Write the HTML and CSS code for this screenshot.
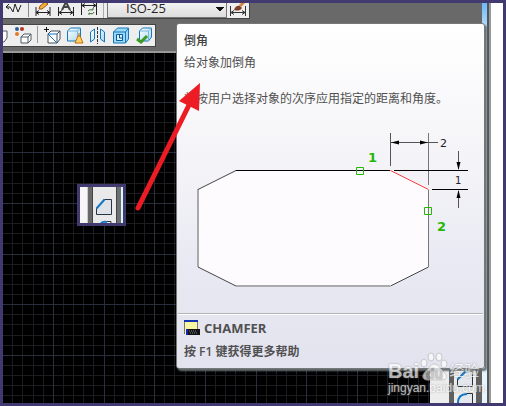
FILE: index.html
```
<!DOCTYPE html>
<html lang="zh-CN">
<head>
<meta charset="utf-8">
<title>CHAMFER</title>
<link rel="stylesheet" href="styles.css">
</head>
<body>
<div class="frame">
  <main class="app">
    <header class="toolbars">
      <div class="toolbar toolbar-dim">
        <svg width="104" height="15" viewBox="3 3 104 15" fill="none" stroke="#222" aria-hidden="true">
          <path d="M6 7l3-3M6 7l3 2M6 7h4l3 5 2-8 3 8 3-7"/>
          <path d="M28.500 3v14" stroke="#888"/>
          <path d="M36 7v9M50 7v9M36 12.500h14M39 10.500l-3 2 3 2M47 10.500l3 2-3 2"/>
          <path d="M39 9l1-3 5-4 3 2-6 5z" fill="#f5b335" stroke="#a8530c"/>
          <path d="M58.500 7v9M73.500 7v9M59 12.500h14M62 10.500l-3 2 3 2M70 10.500l3 2-3 2"/>
          <path d="M62 10l4-8 4 8M63 7h6" stroke="#444" stroke-width="2"/>
          <path d="M81.500 3v12M96.500 3v12M82 5.500h14M85 3.500l-3 2 3 2M93 3.500l3 2-3 2"/>
          <path d="M88 11q1-2 5-1v-2M94 12q-1 3-5 1v2" stroke="#35702b"/>
          <path d="M103.500 3v15" stroke="#aaa"/>
        </svg>
        <select class="style-select" aria-label="ISO-25"><option>ISO-25</option></select>
        <svg width="22" height="15" viewBox="227 3 22 15" fill="none" stroke="#333" aria-hidden="true">
          <path d="M230.500 6v10M245.500 6v10M231 12.500h14M234 10.500l-3 2 3 2M242 10.500l3 2-3 2"/>
          <path d="M234 10c1-4 4-5 6-4l2 2c-2 3-5 3-8 2z" fill="#7d4026" stroke="none"/>
          <path d="M240 6l4-4" stroke="#d88743" stroke-width="3"/>
        </svg>
      </div>
      <div class="toolbar">
        <svg width="152" height="21" viewBox="3 24 152 21" fill="none" aria-hidden="true">
          <defs>
            <linearGradient id="ice" x1="0" y1="0" x2="1" y2="1"><stop offset="0" stop-color="#fff"/><stop offset="1" stop-color="#a9d8f2"/></linearGradient>
          </defs>
          <path d="M3 30h4v7l-3 4H3" fill="#fff" stroke="#4c5863"/>
          <circle cx="17" cy="28" r="2" fill="#285f9b"/><circle cx="22" cy="28" r="2" fill="#b93228"/><circle cx="17" cy="33" r="2" fill="#e37921"/>
          <path d="M21 36l3-3h7v6l-3 3h-7zM21 36h7v6M28 36l3-3" fill="#fff" stroke="#4c5863"/>
          <path d="M37.500 25v17" stroke="#999"/>
          <path d="M44 28.500h5M46.500 26v5" stroke="#111"/>
          <path d="M48 33l3-3h9v8l-3 4h-9zM57 33v9M57 33l3-3" fill="#fff" stroke="#46515d"/>
          <path d="M48 33h9M48 33l9 9" stroke="#1773bd"/>
          <path d="M67.500 30l3-3h10v10l-3 3h-10z" fill="url(#ice)" stroke="#1678bb"/>
          <path d="M67.500 30h10v10M77.500 30l3-3" stroke="#74b9df"/>
          <path d="M79 32v3M78 35l-3 7h8l-3-7z" fill="#ffd36a" stroke="#c46d00"/>
          <path d="M90.500 31l4-3v10l-4 3zM100.500 28l4 3v10l-4-3z" fill="url(#ice)" stroke="#1678bb"/>
          <path d="M97.500 26v17" stroke="#333" stroke-dasharray="3 1"/>
          <path d="M113.500 31l4-4h11v11l-3 4h-12z" fill="#9bd8f7" stroke="#1678bb"/>
          <path d="M113.500 31h12v11M125.500 31l3-4" stroke="#1678bb"/>
          <path d="M116.500 33.500h6v6h-6z" fill="#d8f1ff" stroke="#075b98"/><path d="M119.500 34v3h3" stroke="#075b98"/>
          <path d="M139.500 30l3-3h9v9l-3 4h-9z" fill="url(#ice)" stroke="#1678bb"/>
          <path d="M139.500 30h9v10M148.500 30l3-3" stroke="#74b9df"/>
          <path d="M137 38l4 3 6-6" stroke="#3c9b25" stroke-width="3"/>
        </svg>
      </div>
    </header>
    <section class="canvas">
      <svg class="grid" width="100%" height="100%" aria-hidden="true">
        <defs>
          <pattern id="grid" width="152" height="152" patternUnits="userSpaceOnUse" patternTransform="translate(50 -2)">
            <path d="M10.500 0v152M20.500 0v152M30.500 0v152M40.500 0v152M61.500 0v152M71.500 0v152M81.500 0v152M91.500 0v152M111.500 0v152M121.500 0v152M132.500 0v152M142.500 0v152M0 10.500h152M0 20.500h152M0 30.500h152M0 40.500h152M0 61.500h152M0 71.500h152M0 81.500h152M0 91.500h152M0 111.500h152M0 121.500h152M0 132.500h152M0 142.500h152" stroke="#1b1b20"/>
            <path d="M.5 0v152M51.500 0v152M101.500 0v152M0 .5h152M0 51.500h152M0 101.500h152" stroke="#2b2e3d"/>
          </pattern>
        </defs>
        <rect width="100%" height="100%" fill="url(#grid)"/>
      </svg>
      <aside class="dock">
        <div class="dock-scroll"></div>
        <div class="dock-tools">
          <svg width="22" height="40" viewBox="454 363 22 40" fill="none" aria-hidden="true">
            <path d="M457.500 379v7.500h15v-15h-7z" fill="#e4e7eb" stroke="#26313d"/><path d="M457.500 379.500l8-8" stroke="#1175c4" stroke-width="2"/>
            <path d="M458 403q0-9 9-9h5v9" fill="#e4e7eb"/><path d="M458 403q0-9 9-9" stroke="#1175c4" stroke-width="2"/><path d="M467 393.500h5.500v9.500" stroke="#26313d"/>
          </svg>
        </div>
      </aside>
    </section>
  </main>
  <div class="edge"></div>
  <div class="margin"></div>

  <article class="tooltip">
    <div class="tip-body">
      <h1>倒角</h1>
      <p class="summary">给对象加倒角</p>
      <p class="detail">将按用户选择对象的次序应用指定的距离和角度。</p>
      <svg class="diagram" viewBox="184 127 290 166" fill="none">
        <path d="M198 189.500L236 170.500H390.500L428.500 189.500V267L390.500 286H236L198 267z" fill="#fefbff"/>
        <path d="M198 189v78M236 286h154" stroke="#aaa" stroke-width="2"/>
        <path d="M198 189.500l38-19M198 267l38 19M390.500 286l38-19" stroke="#444"/>
        <path d="M428.500 133v52M428.500 190v77" stroke="#777"/>
        <path d="M236 170.500h154M394 170.500h74M432 189.500h36" stroke="#000"/>
        <path d="M390.500 170.500l38 19" stroke="#ff3b3b"/>
        <path d="M390.500 133v33M391 142.500h47M458.500 151v18M458.500 191v17" stroke="#555"/>
        <path d="M391 142.500l8-2v4zM428 142.500l-8-2v4zM458.500 170l-2-8h4zM458.500 190l-2 8h4z" fill="#000"/>
        <path d="M356.500 167.500h7v7h-7zM424.500 207.500h7v7h-7z" stroke="#24b800"/>
        <text class="pick" x="368" y="162">1</text><text class="pick" x="437" y="231">2</text>
        <text class="measure" x="440" y="147">2</text><text class="measure small" x="455" y="184">1</text>
      </svg>
    </div>
    <footer class="tip-footer">
      <div class="command">
        <svg width="16" height="16" viewBox="0 0 16 16" aria-hidden="true">
          <path d="M0 0h14v14H0z" fill="#f8f6a2"/><path d="M0 0h14v2H0z" fill="#1231ad"/><path d="M.5 2v12M13.500 2v7" stroke="#777"/><path d="M2 9h14v6H2z" fill="#111"/><path d="M2 9h2v6H2z" fill="#1426b5"/><path d="M5 11h7M6 13h8" stroke="#888" stroke-dasharray="1 1"/>
        </svg>
        <strong>CHAMFER</strong>
      </div>
      <p>按 F1 键获得更多帮助</p>
    </footer>
  </article>

  <div class="inset">
    <svg width="43" height="36" viewBox="80 187 43 36" fill="none" aria-hidden="true">
      <path d="M80 187h43v36H80z" fill="#e9e9e9"/><path d="M80 187h7v36h-7z" fill="#f7f5f7"/><path d="M88 187h5v36h-5z" fill="#686868"/><path d="M87.500 187v36" stroke="#ccc"/><path d="M92.500 187v36M116.500 187v36" stroke="#444"/><path d="M117 187h4v36h-4z" fill="#6c7072"/><path d="M121 187h2v36h-2z" fill="#dff7fa"/>
      <path d="M96.500 208.500v6h15v-15h-7z" fill="#dfe3e7" stroke="#283440"/><path d="M96.500 208.500l8-9" stroke="#1675c6" stroke-width="2"/>
      <path d="M101 223q2-2 6-1" stroke="#1675c6" stroke-width="2"/><path d="M107 221.500h4v2" stroke="#283440"/>
    </svg>
  </div>
  <svg class="arrow" width="70" height="134" viewBox="133 80 70 134" aria-hidden="true">
    <path d="M138 208L191 101" stroke="#ed1c24" stroke-width="5" stroke-linecap="round"/><path d="M200 83l-21 18 20 10z" fill="#ed1c24"/>
  </svg>
  <div class="watermark">
    <div class="brand"><span>Bai</span><svg width="28" height="30" viewBox="418 350 28 30" aria-hidden="true">
      <g fill="#fff" stroke="#bbb"><ellipse cx="422" cy="362" rx="3" ry="4"/><ellipse cx="429" cy="356" rx="3" ry="4"/><ellipse cx="437" cy="356" rx="3" ry="4"/><ellipse cx="442" cy="363" rx="3" ry="4"/><path d="M432 363c-4 0-5 5-9 8-4 4-2 8 2 8h15c5 0 6-4 2-8-5-4-5-8-10-8z"/></g><text x="424" y="378">du</text>
    </svg><span class="cn">经验</span></div>
    <div class="site">jingyan.baidu.com</div>
  </div>
</div>
</body>
</html>
```

FILE: styles.css
```
* { box-sizing: border-box; }
body, h1, p { margin: 0; }
body { font-family: "Open Sans", "Noto Sans CJK SC", sans-serif; font-size: 12px; color: #505050; }

.frame {
  position: relative;
  display: flex;
  min-height: 100vh;
  border: 3px solid #403a70;
  background: #fff;
  overflow: hidden;
}
.app { flex: 1; min-width: 0; display: flex; flex-direction: column; }

.toolbars {
  display: flex;
  flex-direction: column;
  align-items: flex-start;
  gap: 5px;
  padding-bottom: 4px;
  background: #696969;
  border-bottom: 2px solid #999;
}
.toolbar { display: flex; background: #eee; border: 1px solid #444; border-left: 0; }
.toolbar:first-child { border-top: 0; }
.style-select {
  width: 120px;
  height: 15px;
  padding: 0 18px 4px;
  border: 1px solid #777;
  border-top: 0;
  border-radius: 0;
  background:
    linear-gradient(to top right, transparent 50%, #111 50%) right 6px top 4px / 4px 4px no-repeat,
    linear-gradient(to top left, transparent 50%, #111 50%) right 2px top 4px / 4px 4px no-repeat,
    linear-gradient(#f2f2f2, #ddd);
  font: 13px/10px "Open Sans", sans-serif;
  color: #222;
  appearance: none;
}

.canvas { flex: 1; display: flex; justify-content: flex-end; background: #000; position: relative; }
.grid { position: absolute; inset: 0; }
.dock { position: relative; display: flex; }
.dock-scroll { width: 19px; background: #ededed; }
.dock-tools {
  display: flex;
  align-items: flex-end;
  background: #ececec;
  border-left: 5px solid #606060;
  border-right: 6px solid #606060;
}
.dock-tools svg { display: block; }

.edge {
  width: 9px;
  border-right: 2px solid #999;
  background: linear-gradient(to right, transparent 5px, #50575c 5px), linear-gradient(#6bb9fb, #e6f5fc 40px);
}
.margin { width: 12px; }

.tooltip {
  position: absolute;
  left: 173px;
  right: 18px;
  top: 20px;
  border: 1px solid #777;
  border-radius: 3px;
  background: linear-gradient(#fff, #f4f4f8 40%, #e9e9f3 70%, #e3e3ef);
  box-shadow: 2px 2px 2px #667072;
}
.tip-body { padding: 7px 10px 20px 7px; }
.tooltip h1 { font-size: 12px; line-height: 20px; font-weight: 500; color: #404040; }
.summary { line-height: 24px; }
.detail { padding-top: 12px; line-height: 24px; white-space: nowrap; }
.diagram { display: block; width: 100%; margin-top: 16px; }
.pick { font: bold 13px "DejaVu Sans", sans-serif; fill: #24b800; }
.measure { font: 11px "DejaVu Sans", sans-serif; fill: #222; }
.small { font-size: 10px; }
.tip-footer {
  margin: 0 1px;
  padding: 2px 6px 4px;
  border-top: 1px solid #b5b5b5;
  box-shadow: inset 0 1px #fff;
  line-height: 24px;
  font-weight: 600;
}
.command { display: flex; align-items: center; gap: 4px; font-size: 13px; }
.command strong { font-weight: 700; }

.inset { position: absolute; left: 74px; top: 181px; border: 3px solid #403a70; }
.inset svg { display: block; }
.arrow { position: absolute; left: 130px; top: 77px; }

.watermark {
  position: absolute;
  left: 385px;
  bottom: 8px;
  color: #fff;
  opacity: .7;
  text-shadow: 0 0 2px #777;
  font-family: "Liberation Sans", "Noto Sans CJK SC", sans-serif;
}
.brand { display: flex; align-items: flex-end; gap: 1px; font-size: 20px; line-height: 20px; font-weight: bold; }
.brand svg text { font: bold 14px "Liberation Sans", sans-serif; fill: #bbb; }
.brand .cn { font-size: 15px; font-weight: 400; }
.site { font-size: 12px; line-height: 14px; }
```
